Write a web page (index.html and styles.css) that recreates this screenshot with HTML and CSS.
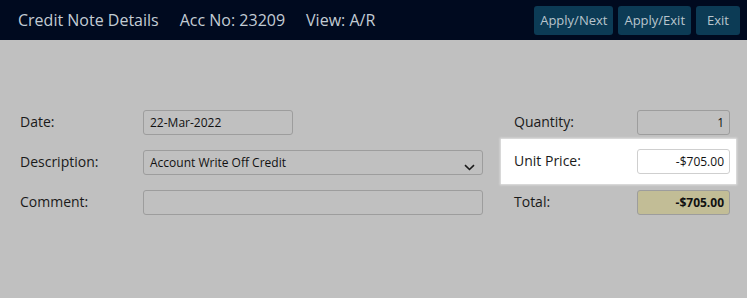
FILE: index.html
```html
<!DOCTYPE html>
<html>
<head>
<meta charset="utf-8">
<link rel="stylesheet" href="styles.css">
</head>
<body>
<header class="topbar">
  <div class="titles">
    <span class="title">Credit Note Details</span>
    <span class="title">Acc No: 23209</span>
    <span class="title">View: A/R</span>
  </div>
  <div class="actions">
    <button class="btn">Apply/Next</button>
    <button class="btn">Apply/Exit</button>
    <button class="btn">Exit</button>
  </div>
</header>
<main class="form">
  <div class="col left">
    <div class="row">
      <span class="label">Date:</span>
      <div class="field date">22-Mar-2022</div>
    </div>
    <div class="row">
      <span class="label">Description:</span>
      <div class="field select">
        <span>Account Write Off Credit</span>
        <svg class="chev" width="11" height="7" viewBox="0 0 11 7"><path d="M1 1.2 L5.5 5.5 L10 1.2" fill="none" stroke="#1a1a1a" stroke-width="1.6"/></svg>
      </div>
    </div>
    <div class="row">
      <span class="label">Comment:</span>
      <div class="field"></div>
    </div>
  </div>
  <div class="col right">
    <div class="row">
      <span class="label">Quantity:</span>
      <div class="field num">1</div>
    </div>
    <div class="row active">
      <span class="label">Unit Price:</span>
      <div class="field num white">-$705.00</div>
    </div>
    <div class="row">
      <span class="label">Total:</span>
      <div class="field num total">-$705.00</div>
    </div>
  </div>
</main>
</body>
</html>
```
FILE: styles.css
```css
html, body {
  margin: 0;
  padding: 0;
}
body {
  background: #c0c0c0;
  font-family: "Open Sans", "Noto Sans", sans-serif;
  color: #1a1a1a;
  width: 747px;
  height: 298px;
  overflow: hidden;
}
.topbar {
  height: 40px;
  background: #000a1f;
  display: flex;
  align-items: center;
  justify-content: space-between;
  padding: 0 7px 0 18px;
  box-sizing: border-box;
}
.titles {
  display: flex;
  gap: 21px;
}
.title {
  color: #c3ccd4;
  font-size: 16px;
}
.actions {
  display: flex;
  gap: 5px;
}
.btn {
  height: 29px;
  background: #0c3b55;
  border: none;
  border-radius: 3px;
  color: #b9c5cd;
  font-family: "Open Sans", "Noto Sans", sans-serif;
  font-size: 13px;
  padding: 0 6px;
}
.btn:last-child {
  padding: 0 11px;
}
.form {
  display: flex;
  gap: 18px;
  padding: 70px 0 0 20px;
}
.col {
  display: flex;
  flex-direction: column;
  gap: 15px;
}
.left {
  width: 463px;
}
.right {
  width: 235px;
}
.row {
  display: grid;
  grid-template-columns: 123px 1fr;
  align-items: center;
  height: 25px;
}
.right .row {
  padding: 0 6px 0 13px;
}
.right .row.active {
  background: #fff;
  height: 45px;
  margin: -11px 0 -9px;
  box-shadow: 0 0 2px 1px #e4e4e4;
}
.label {
  font-size: 14px;
  color: #1a1a1a;
  margin-top: -3px;
}
.field {
  height: 25px;
  box-sizing: border-box;
  border: 1px solid #9d9d9d;
  border-radius: 3px;
  font-size: 12px;
  display: flex;
  align-items: center;
  padding: 0 6px;
  color: #111;
}
.date {
  width: 150px;
}
.select {
  justify-content: space-between;
  padding-right: 7px;
}
.chev {
  margin-top: 10px;
}
.num {
  justify-content: flex-end;
  padding-right: 5px;
}
.white {
  background: #fff;
  border-color: #cfcfcf;
}
.total {
  background: #c2bd96;
  font-weight: bold;
}
```
